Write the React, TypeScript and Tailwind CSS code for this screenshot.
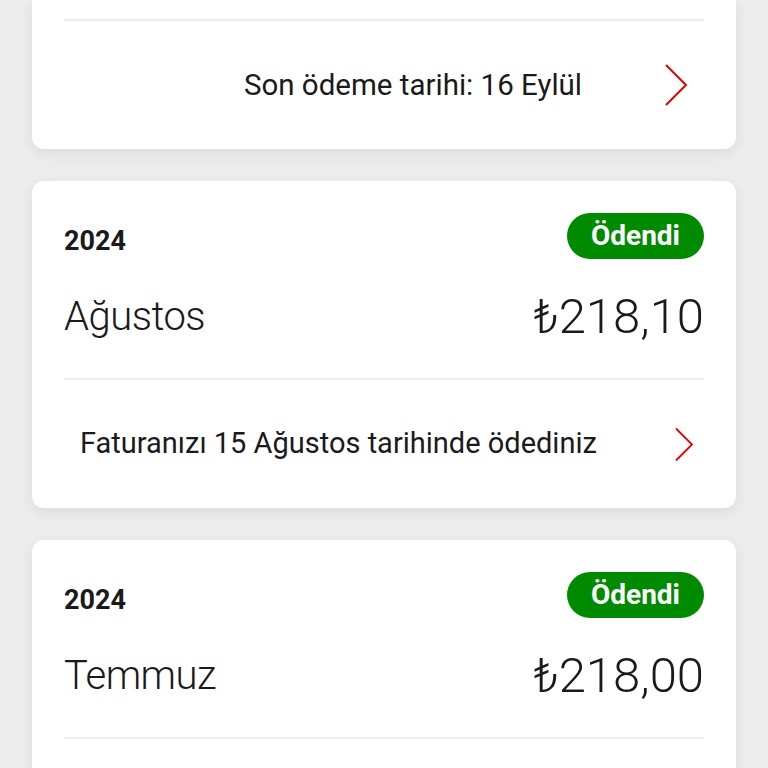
import React from 'react';

type Bill = {
  year: string;
  month: string;
  amount: string;
  status: string;
  note?: string;
};

const bills: Bill[] = [
  { year: '2024', month: 'Ağustos', amount: '₺218,10', status: 'Ödendi', note: 'Faturanızı 15 Ağustos tarihinde ödediniz' },
  { year: '2024', month: 'Temmuz', amount: '₺218,00', status: 'Ödendi' },
];

function Chevron({ size }: { size: 'lg' | 'sm' }) {
  if (size === 'lg') {
    return (
      <svg width="24" height="44" viewBox="0 0 24 44" fill="none">
        <polyline points="2,2 22,22 2,42" stroke="#e60000" strokeWidth="2" />
      </svg>
    );
  }
  return (
    <svg width="20" height="35" viewBox="0 0 20 35" fill="none">
      <polyline points="2,1.5 18,17.5 2,33.5" stroke="#e60000" strokeWidth="1.8" />
    </svg>
  );
}

// the current bill: only its lower part is on screen
function DueCard() {
  return (
    <div className="bg-white rounded-b-xl shadow-[0_4px_14px_rgba(0,0,0,0.07)]">
      <div className="px-8 pt-[19px]">
        <div className="h-[2px] bg-[#ededed]" />
      </div>
      <div className="px-8">
        <div className="flex items-center justify-end h-[128px] pr-4">
          <span className="text-[29.5px] text-[#1a1a1a]">Son ödeme tarihi: 16 Eylül</span>
          <span className="ml-[82px] flex"><Chevron size="lg" /></span>
        </div>
      </div>
    </div>
  );
}

function BillCard({ bill }: { bill: Bill }) {
  return (
    <div className="bg-white rounded-xl shadow-[0_4px_14px_rgba(0,0,0,0.07)]">
      <div className="px-8 pt-8">
        <div className="flex items-end justify-between h-[46px]">
          <span className="text-[27px] font-bold text-[#1a1a1a] leading-none pb-[4px]">{bill.year}</span>
          <span className="h-[46px] px-6 rounded-full bg-[#008a00] text-white text-[28px] font-bold flex items-center leading-none">
            {bill.status}
          </span>
        </div>
        <div className="flex items-center justify-between h-[119px] pb-1">
          <span className="text-[40px] font-light text-[#1a1a1a] leading-none tracking-[-0.5px]">{bill.month}</span>
          <span className="text-[49px] font-light text-[#1a1a1a] leading-none">{bill.amount}</span>
        </div>
        <div className="h-[2px] bg-[#ededed]" />
      </div>
      <div className="px-8">
        <div className="flex items-center justify-between h-[128px] pl-4 pr-[10px]">
          {bill.note && <span className="text-[29px] text-[#1a1a1a]">{bill.note}</span>}
          {bill.note && <Chevron size="sm" />}
        </div>
      </div>
    </div>
  );
}

export default function App() {
  return (
    <div className="min-h-screen bg-[#ececec] overflow-hidden" style={{ fontFamily: 'Roboto, "Noto Sans", sans-serif' }}>
      <div className="px-8 flex flex-col gap-8 pb-8">
        <DueCard />
        {bills.map((bill, i) => (
          <BillCard key={i} bill={bill} />
        ))}
      </div>
    </div>
  );
}
